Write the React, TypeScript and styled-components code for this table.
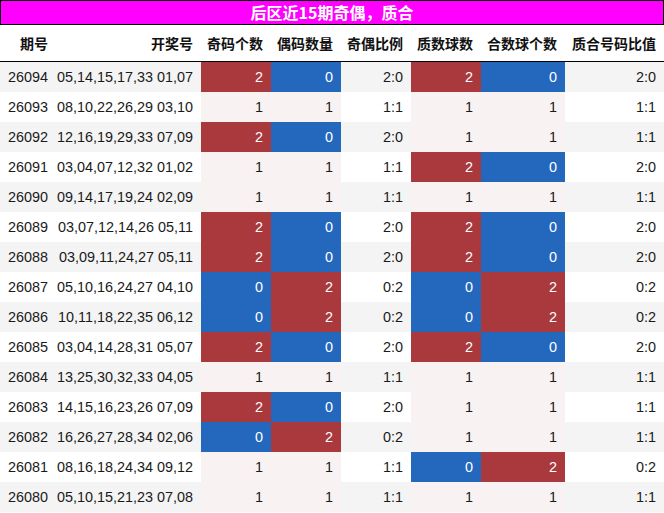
import React from "react";
import styled, { createGlobalStyle } from "styled-components";

const GlobalStyle = createGlobalStyle`
	html, body {
		margin: 0;
		padding: 0;
		background: #ffffff;
	}
	body {
		font-family: "Liberation Sans", "Noto Sans CJK SC", Arial, sans-serif;
		color: #1a1a1a;
	}
`;

type Row = [string, string, number, number, string, number, number, string];

const rows: Row[] = [
	["26094", "05,14,15,17,33 01,07", 2, 0, "2:0", 2, 0, "2:0"],
	["26093", "08,10,22,26,29 03,10", 1, 1, "1:1", 1, 1, "1:1"],
	["26092", "12,16,19,29,33 07,09", 2, 0, "2:0", 1, 1, "1:1"],
	["26091", "03,04,07,12,32 01,02", 1, 1, "1:1", 2, 0, "2:0"],
	["26090", "09,14,17,19,24 02,09", 1, 1, "1:1", 1, 1, "1:1"],
	["26089", "03,07,12,14,26 05,11", 2, 0, "2:0", 2, 0, "2:0"],
	["26088", "03,09,11,24,27 05,11", 2, 0, "2:0", 2, 0, "2:0"],
	["26087", "05,10,16,24,27 04,10", 0, 2, "0:2", 0, 2, "0:2"],
	["26086", "10,11,18,22,35 06,12", 0, 2, "0:2", 0, 2, "0:2"],
	["26085", "03,04,14,28,31 05,07", 2, 0, "2:0", 2, 0, "2:0"],
	["26084", "13,25,30,32,33 04,05", 1, 1, "1:1", 1, 1, "1:1"],
	["26083", "14,15,16,23,26 07,09", 2, 0, "2:0", 1, 1, "1:1"],
	["26082", "16,26,27,28,34 02,06", 0, 2, "0:2", 1, 1, "1:1"],
	["26081", "08,16,18,24,34 09,12", 1, 1, "1:1", 0, 2, "0:2"],
	["26080", "05,10,15,21,23 07,08", 1, 1, "1:1", 1, 1, "1:1"],
];

const headers = ["期号", "开奖号", "奇码个数", "偶码数量", "奇偶比例", "质数球数", "合数球个数", "质合号码比值"];
const widths = [56, 145, 70, 70, 70, 70, 84, 99];

const Page = styled.div`
	width: 664px;
`;

const Title = styled.div`
	height: 23px;
	border: 1px solid #000000;
	background: #ff00ff;
	color: #ffffff;
	font-family: "Noto Sans CJK SC", "Liberation Sans", sans-serif;
	font-weight: 700;
	font-size: 16px;
	line-height: 23px;
	text-align: center;
`;

const Table = styled.table`
	width: 664px;
	border-collapse: collapse;
	table-layout: fixed;
	font-size: 14.4px;
`;

const HeadCell = styled.th`
	height: 36px;
	padding: 0 8px 0 0;
	text-align: right;
	font-family: "Noto Sans CJK SC", "Liberation Sans", sans-serif;
	font-weight: 700;
	font-size: 14px;
	color: #111111;
	border-bottom: 1px solid #000000;
	white-space: nowrap;
`;

const BodyRow = styled.tr`
	&:nth-child(odd) > td {
		background: #f4f4f4;
	}
	&:nth-child(even) > td {
		background: #ffffff;
	}
`;

const Cell = styled.td`
	height: 30px;
	padding: 0 8px 0 0;
	text-align: right;
	white-space: nowrap;
	line-height: 30px;
`;

const countColours: Record<number, { bg: string; fg: string }> = {
	0: { bg: "#2368bd", fg: "#ffffff" },
	1: { bg: "#f9f2f2", fg: "#1a1a1a" },
	2: { bg: "#a9393c", fg: "#ffffff" },
};

const CountCell = styled(Cell)<{ $value: number }>`
	${BodyRow}:nth-child(n) > & {
		background: ${(p) => countColours[p.$value].bg};
	}
	color: ${(p) => countColours[p.$value].fg};
`;

export default function App() {
	return (
		<Page>
			<GlobalStyle />
			<Title>后区近15期奇偶，质合</Title>
			<Table>
				<colgroup>
					{widths.map((w, i) => (
						<col key={i} style={{ width: w }} />
					))}
				</colgroup>
				<thead>
					<tr>
						{headers.map((h) => (
							<HeadCell key={h}>{h}</HeadCell>
						))}
					</tr>
				</thead>
				<tbody>
					{rows.map((r) => (
						<BodyRow key={r[0]}>
							<Cell>{r[0]}</Cell>
							<Cell>{r[1]}</Cell>
							<CountCell $value={r[2]}>{r[2]}</CountCell>
							<CountCell $value={r[3]}>{r[3]}</CountCell>
							<Cell>{r[4]}</Cell>
							<CountCell $value={r[5]}>{r[5]}</CountCell>
							<CountCell $value={r[6]}>{r[6]}</CountCell>
							<Cell>{r[7]}</Cell>
						</BodyRow>
					))}
				</tbody>
			</Table>
		</Page>
	);
}
